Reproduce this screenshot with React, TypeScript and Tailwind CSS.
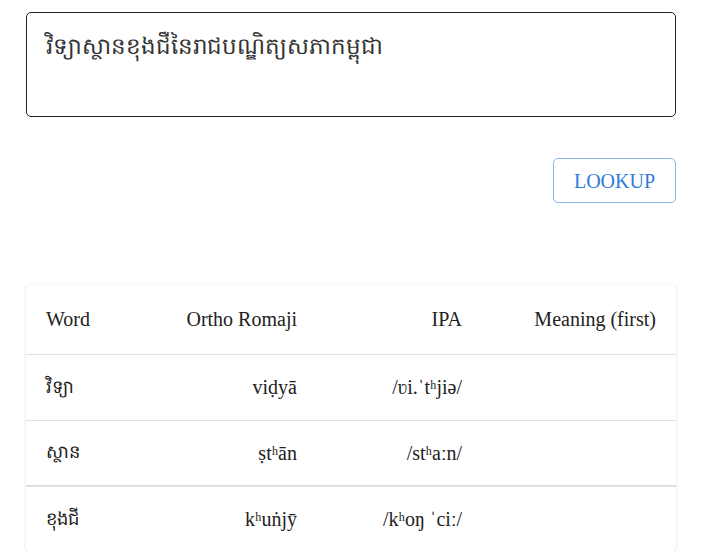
const rows = [
  { word: "វិទ្យា", ortho: "viḍyā", ipa: "/ʋi.ˈtʰjiə/" },
  { word: "ស្ថាន", ortho: "ṣtʰān", ipa: "/stʰaːn/" },
  { word: "ខុងជី", ortho: "kʰuṅjȳ", ipa: "/kʰoŋ ˈciː/" },
];

export default function App() {
  return (
    <div className="min-h-[552px] bg-white pl-[26px] pr-[34px] pt-3 font-[Liberation_Serif,Times_New_Roman,serif] text-[20px] text-[#222]">
      <textarea
        className="block h-[105px] w-full resize-none rounded-[5px] border border-[#222] px-[19px] pt-[18px] font-[Liberation_Serif,Times_New_Roman,serif] text-[23px] leading-[32px] text-[#333] outline-none"
        defaultValue="វិទ្យាស្ថានខុងជឺនៃរាជបណ្ឌិត្យសភាកម្ពុជា"
      />
      <div className="mt-[41px] flex justify-end">
        <button className="h-[45px] w-[123px] rounded-[5px] border border-[#8ab4e8] font-[Liberation_Serif,Times_New_Roman,serif] text-[20px] text-[#2f7ad8]">
          LOOKUP
        </button>
      </div>
      <div className="mt-[81px] overflow-hidden rounded-[5px] bg-white shadow-[0_1px_3px_rgba(0,0,0,0.12),0_0_1px_rgba(0,0,0,0.1)]">
        <table className="w-full table-fixed border-collapse">
          <colgroup>
            <col className="w-[130px]" />
            <col className="w-[161px]" />
            <col className="w-[165px]" />
            <col />
          </colgroup>
          <thead>
            <tr className="h-[70px] border-b border-[#e0e0e0]">
              <th className="pl-[20px] text-left font-normal">Word</th>
              <th className="pr-[20px] text-right font-normal">Ortho Romaji</th>
              <th className="pr-[20px] text-right font-normal">IPA</th>
              <th className="pr-[20px] text-right font-normal">Meaning (first)</th>
            </tr>
          </thead>
          <tbody>
            {rows.map((r, i) => (
              <tr
                key={i}
                className={
                  i === 1
                    ? "h-[66px] border-b-2 border-[#dedede]"
                    : "h-[66px] border-b border-[#e0e0e0]"
                }
              >
                <td className="pl-[20px] text-left text-[18px]">{r.word}</td>
                <td className="pr-[20px] text-right">{r.ortho}</td>
                <td className="pr-[20px] text-right">{r.ipa}</td>
                <td className="pr-[20px] text-right"></td>
              </tr>
            ))}
          </tbody>
        </table>
      </div>
    </div>
  );
}
